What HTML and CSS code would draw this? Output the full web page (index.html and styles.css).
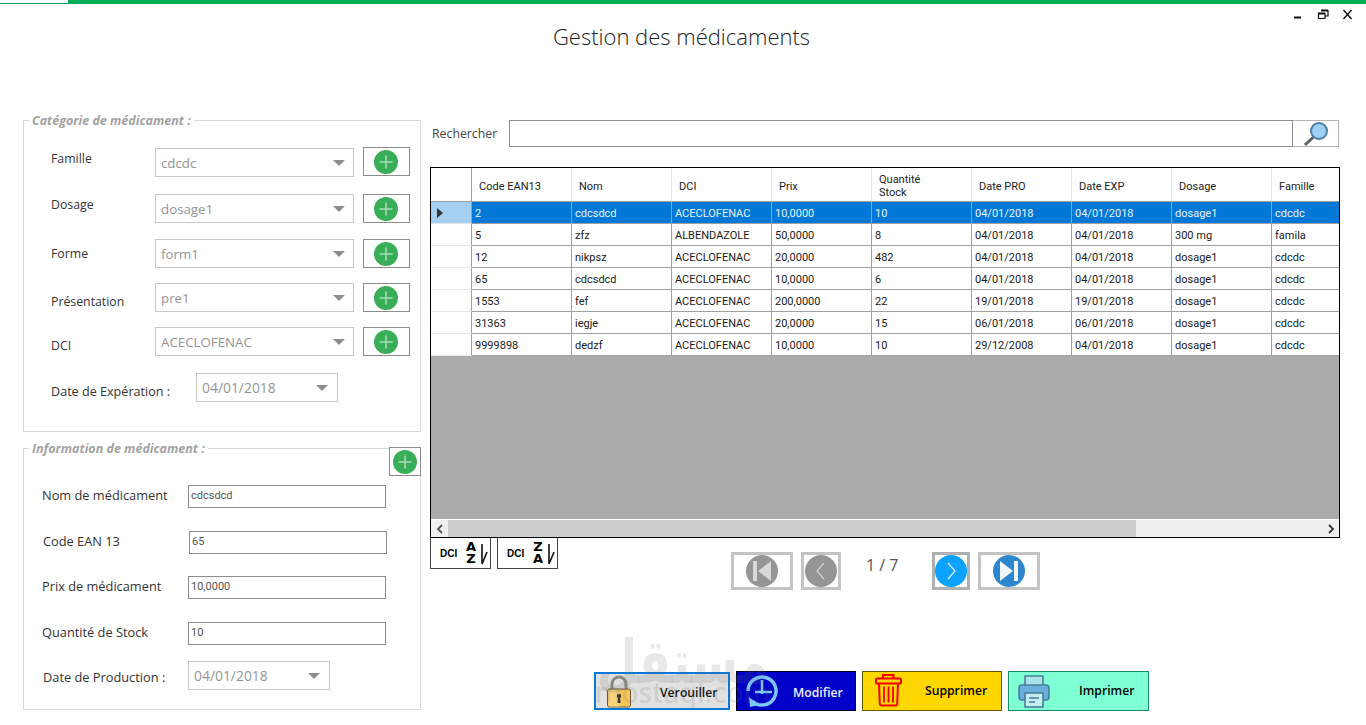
FILE: index.html
```html
<!DOCTYPE html>
<html lang="fr">
<head>
<meta charset="utf-8">
<title>Gestion des médicaments</title>
<link rel="stylesheet" href="styles.css">
</head>
<body>
<svg class="sprite" aria-hidden="true">
  <symbol id="plus" viewBox="0 0 24 24">
    <circle cx="12" cy="12" r="12" fill="#38ae58"/>
    <path d="M12 5.500v13M5.500 12h13" stroke="#a9dcb6" stroke-width="1.600" fill="none"/>
  </symbol>
</svg>
<div class="app">
  <div class="topbar"><span class="topbar-thin"></span><span class="topbar-thick"></span></div>
  <div class="winctl">
    <svg class="winctl-svg" width="62" height="14" viewBox="0 0 62 14">
      <path d="M0 10.500h7" stroke="#111" stroke-width="2" fill="none"/>
      <path d="M24.500 6.500h6.500v5h-6.500zM24.500 6.500v-1M27 3.500h7v5.500h-3" stroke="#111" stroke-width="1.200" fill="none"/>
      <path d="M27 3.500h7M24.500 6.500h6.500" stroke="#111" stroke-width="2" fill="none"/>
      <path d="M49.500 3l8 9M57.500 3l-8 9" stroke="#111" stroke-width="1.500" fill="none"/>
    </svg>
  </div>
  <h1 class="title">Gestion des médicaments</h1>
  <div class="main">
    <div class="left">
      <fieldset class="group group-cat">
        <legend class="group-title">Catégorie de médicament :</legend>
        <div class="cat-row">
          <span class="lbl lbl-up">Famille</span>
          <div class="combo">cdcdc</div>
          <button class="add-btn"><svg class="add-ic"><use href="#plus"/></svg></button>
        </div>
        <div class="cat-row">
          <span class="lbl lbl-up">Dosage</span>
          <div class="combo">dosage1</div>
          <button class="add-btn"><svg class="add-ic"><use href="#plus"/></svg></button>
        </div>
        <div class="cat-row">
          <span class="lbl">Forme</span>
          <div class="combo">form1</div>
          <button class="add-btn"><svg class="add-ic"><use href="#plus"/></svg></button>
        </div>
        <div class="cat-row">
          <span class="lbl lbl-down">Présentation</span>
          <div class="combo">pre1</div>
          <button class="add-btn"><svg class="add-ic"><use href="#plus"/></svg></button>
        </div>
        <div class="cat-row">
          <span class="lbl lbl-down">DCI</span>
          <div class="combo">ACECLOFENAC</div>
          <button class="add-btn"><svg class="add-ic"><use href="#plus"/></svg></button>
        </div>
        <div class="date-row">
          <span class="lbl lbl-down">Date de Expération :</span>
          <div class="combo combo-date">04/01/2018</div>
        </div>
      </fieldset>
      <fieldset class="group group-info">
        <legend class="group-title">Information de médicament :</legend>
        <button class="add-btn add-corner"><svg class="add-ic"><use href="#plus"/></svg></button>
        <div class="info-row">
          <span class="lbl">Nom de médicament</span>
          <div class="field">cdcsdcd</div>
        </div>
        <div class="info-row info-shift">
          <span class="lbl">Code EAN 13</span>
          <div class="field">65</div>
        </div>
        <div class="info-row">
          <span class="lbl">Prix de médicament</span>
          <div class="field">10,0000</div>
        </div>
        <div class="info-row">
          <span class="lbl">Quantité de Stock</span>
          <div class="field">10</div>
        </div>
        <div class="info-row info-date">
          <span class="lbl">Date de Production :</span>
          <div class="combo combo-date">04/01/2018</div>
        </div>
      </fieldset>
    </div>

    <div class="right">
      <div class="search">
        <span class="search-lbl">Rechercher</span>
        <div class="search-input"></div>
        <button class="search-btn">
          <svg width="28" height="26" viewBox="0 0 28 26">
            <path d="M3 24l9-8.500" stroke="#5c6468" stroke-width="3" fill="none"/>
            <circle cx="17" cy="10" r="8" fill="#9fd0f8" stroke="#4c7fa6" stroke-width="2"/>
          </svg>
        </button>
      </div>

      <div class="grid">
        <div class="grid-view">
          <table class="tbl">
            <colgroup>
              <col class="col-head"><col class="col-data"><col class="col-data"><col class="col-data"><col class="col-data"><col class="col-data"><col class="col-data"><col class="col-data"><col class="col-data"><col class="col-data">
            </colgroup>
            <thead>
              <tr>
                <th></th><th>Code EAN13</th><th>Nom</th><th>DCI</th><th>Prix</th><th class="th-two">Quantité<br>Stock</th><th>Date PRO</th><th>Date EXP</th><th>Dosage</th><th>Famille</th>
              </tr>
            </thead>
            <tbody>
              <tr class="sel"><td class="rowhead"><span class="caret"></span></td><td>2</td><td>cdcsdcd</td><td>ACECLOFENAC</td><td>10,0000</td><td>10</td><td>04/01/2018</td><td>04/01/2018</td><td>dosage1</td><td>cdcdc</td></tr>
              <tr><td class="rowhead"></td><td>5</td><td>zfz</td><td>ALBENDAZOLE</td><td>50,0000</td><td>8</td><td>04/01/2018</td><td>04/01/2018</td><td>300 mg</td><td>famila</td></tr>
              <tr><td class="rowhead"></td><td>12</td><td>nikpsz</td><td>ACECLOFENAC</td><td>20,0000</td><td>482</td><td>04/01/2018</td><td>04/01/2018</td><td>dosage1</td><td>cdcdc</td></tr>
              <tr><td class="rowhead"></td><td>65</td><td>cdcsdcd</td><td>ACECLOFENAC</td><td>10,0000</td><td>6</td><td>04/01/2018</td><td>04/01/2018</td><td>dosage1</td><td>cdcdc</td></tr>
              <tr><td class="rowhead"></td><td>1553</td><td>fef</td><td>ACECLOFENAC</td><td>200,0000</td><td>22</td><td>19/01/2018</td><td>19/01/2018</td><td>dosage1</td><td>cdcdc</td></tr>
              <tr><td class="rowhead"></td><td>31363</td><td>iegje</td><td>ACECLOFENAC</td><td>20,0000</td><td>15</td><td>06/01/2018</td><td>06/01/2018</td><td>dosage1</td><td>cdcdc</td></tr>
              <tr><td class="rowhead"></td><td>9999898</td><td>dedzf</td><td>ACECLOFENAC</td><td>10,0000</td><td>10</td><td>29/12/2008</td><td>04/01/2018</td><td>dosage1</td><td>cdcdc</td></tr>
            </tbody>
          </table>
        </div>
        <div class="hscroll">
          <span class="hscroll-arrow">
            <svg width="8" height="10" viewBox="0 0 8 10"><path d="M6 1L2 5l4 4" stroke="#555" stroke-width="1.800" fill="none"/></svg>
          </span>
          <span class="hscroll-thumb"></span>
          <span class="hscroll-rest"></span>
          <span class="hscroll-arrow">
            <svg width="8" height="10" viewBox="0 0 8 10"><path d="M2 1l4 4-4 4" stroke="#333" stroke-width="1.800" fill="none"/></svg>
          </span>
        </div>
      </div>

      <div class="under">
        <div class="sorts">
          <button class="sort-btn">
            <span class="sort-dci">DCI</span>
            <span class="sort-az">A<br>Z</span>
            <svg class="sort-arrow" width="10" height="24" viewBox="0 0 10 24"><path d="M4 3v20l5-12" stroke="#111" stroke-width="1.600" fill="none"/></svg>
          </button>
          <button class="sort-btn">
            <span class="sort-dci">DCI</span>
            <span class="sort-az">Z<br>A</span>
            <svg class="sort-arrow" width="10" height="24" viewBox="0 0 10 24"><path d="M4 3v20l5-12" stroke="#111" stroke-width="1.600" fill="none"/></svg>
          </button>
        </div>
        <div class="pager">
          <button class="pg-btn pg-wide">
            <svg class="pg-ic" viewBox="-16 -16 32 32"><circle r="16" fill="#959595"/><path d="M-9-10h4v20h-4zM9-10v20L-4 0z" fill="#d8d8d8"/></svg>
          </button>
          <button class="pg-btn pg-prev">
            <svg class="pg-ic" viewBox="-16 -16 32 32"><circle r="16" fill="#959595"/><path d="M3-8l-7 8 7 8" stroke="#d0d0d0" stroke-width="1.200" fill="none"/></svg>
          </button>
          <span class="pg-count">1 / 7</span>
          <button class="pg-btn pg-next">
            <svg class="pg-ic" viewBox="-16 -16 32 32"><circle r="16" fill="#0ca2ff"/><path d="M-3-8l7 8-7 8" stroke="#e4f4ff" stroke-width="1.200" fill="none"/></svg>
          </button>
          <button class="pg-btn pg-wide pg-last">
            <svg class="pg-ic" viewBox="-16 -16 32 32"><circle r="16" fill="#2e86cc"/><path d="M5-10h4v20h-4zM-9-10v20L4 0z" fill="#f2f7fb"/></svg>
          </button>
        </div>
      </div>

      <div class="actions">
        <button class="act act-lock">
          <svg class="act-ic" width="26" height="33" viewBox="0 0 26 33">
            <path d="M6 16V9a7 7 0 0 1 14 0v7" stroke="#8b8b80" stroke-width="3" fill="none"/>
            <rect x="1.500" y="14" width="23" height="18" rx="2" fill="#f6c558" stroke="#6d5a34"/>
            <path d="M2 15h11v16.500H4a2 2 0 0 1-2-2z" fill="#f9d47d"/>
            <circle cx="13" cy="21" r="2.200" fill="#3e3a30"/><path d="M12 22h2l.5 6h-3z" fill="#3e3a30"/>
          </svg>
          <span class="act-text">Verouiller</span>
        </button>
        <button class="act act-edit">
          <svg class="act-ic" width="34" height="36" viewBox="0 0 34 36">
            <path d="M7.100 27.900A14 14 0 1 0 3 18" stroke="#7cc8f8" stroke-width="3.500" fill="none"/>
            <path d="M4 24l1 10 9-2z" fill="#7cc8f8"/>
            <path d="M17 7v14M10 19h17" stroke="#7cc8f8" stroke-width="2.500" fill="none"/>
          </svg>
          <span class="act-text">Modifier</span>
        </button>
        <button class="act act-del">
          <svg class="act-ic" width="27" height="34" viewBox="0 0 27 34">
            <path d="M8 4.500V1h10.500v3.500" fill="none" stroke="#f20000" stroke-width="2"/>
            <rect x="1" y="4.500" width="25" height="5" rx="1" fill="none" stroke="#f20000" stroke-width="2"/>
            <path d="M4 9.500l.8 20a2 2 0 0 0 2 2h13.400a2 2 0 0 0 2-2l.8-20" fill="none" stroke="#f20000" stroke-width="2"/>
            <path d="M9 12.500v16M13.500 12.500v16M18 12.500v16" stroke="#f20000" stroke-width="1.800" fill="none"/>
          </svg>
          <span class="act-text">Supprimer</span>
        </button>
        <button class="act act-print">
          <svg class="act-ic" width="32" height="33" viewBox="0 0 32 33">
            <path d="M7 11V1h18v10" fill="#a9e3e6" stroke="#4a7d9c" stroke-width="1.600"/>
            <rect x="1" y="10" width="30" height="15" rx="3" fill="#6ab0dc" stroke="#4a7d9c" stroke-width="1.600"/>
            <rect x="7" y="18" width="18" height="14" fill="#c5eef0" stroke="#4a7d9c" stroke-width="1.600"/>
            <path d="M11 23h10M11 27h6" stroke="#4a7d9c" stroke-width="1.500" fill="none"/>
          </svg>
          <span class="act-text">Imprimer</span>
        </button>
      </div>
    </div>
  </div>
  <div class="watermark" aria-hidden="true">
    <span class="wm-ar">مستقل</span>
    <span class="wm-la">mostaql.com</span>
  </div>
</div>
</body>
</html>
```
FILE: styles.css
```css
* { box-sizing: border-box; }
html, body { margin: 0; padding: 0; background: #fff; }
body { font-family: "Open Sans", "DejaVu Sans", sans-serif; color: #333; }
.sprite { display: block; width: 0; height: 0; overflow: hidden; }
button { font-family: inherit; padding: 0; margin: 0; cursor: default; }

.app { position: relative; width: 1366px; height: 725px; overflow: hidden; background: #fff; }

.topbar { display: flex; align-items: flex-end; height: 4px; }
.topbar-thin { width: 68px; height: 1px; background: #1aa85a; }
.topbar-thick { flex: 1; height: 4px; background: #0aad5a; }

.winctl { position: absolute; top: 4px; right: 10px; }
.winctl-svg { display: block; margin-top: 3px; }

.title { margin: 17px 3px 0 0; height: 30px; line-height: 30px; text-align: center; font-size: 22px; font-weight: 300; color: #222; }

.main { display: flex; gap: 9px; margin-top: 61px; padding-left: 23px; }
.left { width: 398px; display: flex; flex-direction: column; gap: 8px; }
.right { width: 910px; padding-top: 8px; display: flex; flex-direction: column; }

/* group boxes */
.group { position: relative; margin: 0; min-width: 0; border: 1px solid #d8d8d8; }
.group-title { padding: 0 3px; height: 16px; line-height: 18px; font-size: 12.500px; font-style: italic; font-weight: 700; color: #a2a2a2; }
.group-cat { height: 320px; padding: 20px 10px 0 27px; }
.group-cat .group-title { margin-left: -22px; }
.group-info { height: 270px; padding: 29px 0 0 18px; }
.group-info .group-title { margin-left: -13px; }

.lbl { font-size: 12.300px; color: #333; white-space: nowrap; }
.lbl-up { padding-bottom: 8px; }
.lbl-down { padding-top: 8px; }

.cat-row { display: grid; grid-template-columns: 104px 199px 47px; align-items: center; height: 29px; }
.cat-row .add-btn { margin-left: 9px; width: 47px; padding-right: 1px; }
.cat-row:first-of-type .add-btn { margin-top: -2px; }
.cat-row:nth-of-type(2) { margin-top: 17px; }
.cat-row:nth-of-type(3) { margin-top: 16px; }
.cat-row:nth-of-type(4) { margin-top: 15px; }
.cat-row:nth-of-type(5) { margin-top: 15px; }
.date-row { display: grid; grid-template-columns: 145px 142px; align-items: center; height: 29px; margin-top: 17px; }
.date-row .lbl { font-size: 12.600px; }

.combo { position: relative; height: 29px; line-height: 29px; padding-left: 5px; border: 1px solid #c8c8c8; background: #fff; font-size: 13.300px; color: #959595; }
.combo::after { content: ""; position: absolute; right: 8px; top: 11px; border-left: 6px solid transparent; border-right: 6px solid transparent; border-top: 6px solid #8d8d8d; }
.combo-date { width: 142px; line-height: 27px; font-size: 13.900px; }
.combo-date::after { right: 9px; }

.add-btn { display: flex; align-items: center; justify-content: center; height: 29px; background: #fff; border: 1px solid #8c8c8c; }
.add-ic { display: block; width: 24px; height: 24px; }
.add-corner { position: absolute; top: -9px; right: -1px; width: 32px; }

.info-row { display: grid; grid-template-columns: 146px 198px; align-items: center; height: 23px; margin-top: 22px; }
.info-row .lbl { padding-bottom: 4px; font-size: 12.800px; }
.group-info .add-corner + .info-row { margin-top: 0; }
.info-shift { margin-left: 1px; margin-top: 23px; }
.info-row:nth-of-type(4) { margin-top: 23px; }
.info-date { height: 29px; margin-top: 16px; }
.info-row.info-date .lbl { padding: 3px 0 0 1px; }
.field { height: 23px; line-height: 19px; padding-left: 2px; border: 1px solid #8c8c8c; font-family: Roboto, sans-serif; font-size: 11px; color: #555; background: #fff; }

/* search */
.search { display: flex; align-items: center; height: 27px; }
.search-lbl { width: 79px; padding-left: 2px; font-size: 12.300px; color: #444; }
.search-input { width: 784px; height: 27px; border: 1px solid #8c8c8c; background: #fff; }
.search-btn { display: flex; align-items: center; justify-content: center; width: 46px; height: 27px; background: #fff; border: 1px solid #b4b4b4; border-left: 0; }

/* grid */
.grid { display: flex; flex-direction: column; margin-top: 20px; width: 910px; height: 371px; border: 1px solid #000; background: #ababab; }
.grid-view { flex: 1; min-height: 0; overflow: hidden; }
.tbl { table-layout: fixed; width: 941px; border-collapse: separate; border-spacing: 0; background: #fff; font-family: Roboto, sans-serif; font-size: 11px; color: #1a1a1a; }
.col-head { width: 41px; }
.col-data { width: 100px; }
.tbl th { height: 34px; padding: 4px 0 0 7px; border-right: 1px solid #e6e6e6; border-bottom: 1px solid #a0a0a0; text-align: left; font-weight: 400; line-height: 13px; color: #222; }
.tbl .th-two { padding-top: 2px; }
.tbl td { height: 22px; padding: 2px 0 0 3px; border-right: 1px solid #a0a0a0; border-bottom: 1px solid #a0a0a0; white-space: nowrap; }
.tbl th:first-child { border-right-color: #a0a0a0; }
.tbl .rowhead { padding: 0; border-bottom-color: #e6e6e6; }
.sel td { background: #0078d7; color: #e8f2fb; }
.sel td.rowhead { background: #a6d0f2; }
.caret { display: block; margin-left: 6px; width: 0; height: 0; border-top: 5px solid transparent; border-bottom: 5px solid transparent; border-left: 6px solid #333; }

.hscroll { display: flex; flex: none; height: 18px; border-top: 1px solid #fff; background: #f0f0f0; }
.hscroll-arrow { display: flex; align-items: center; justify-content: center; width: 17px; flex: none; }
.hscroll-thumb { width: 688px; flex: none; background: #cdcdcd; }
.hscroll-rest { flex: 1; }

/* under the grid */
.under { display: flex; align-items: flex-start; }
.sorts { display: flex; gap: 6px; width: 301px; flex: none; }
.sort-btn { display: flex; align-items: center; width: 61px; height: 31px; padding-left: 9px; background: #fff; border: 1px solid #444; border-top: 0; color: #000; }
.sort-dci { width: 17px; font-family: "Liberation Sans", sans-serif; font-size: 10px; font-weight: 700; white-space: nowrap; }
.sort-az { margin-left: 8px; width: 12px; font-family: "DejaVu Sans", sans-serif; font-size: 13px; font-weight: 700; line-height: 12px; text-align: center; }
.sort-arrow { margin-left: 1px; }

.pager { display: flex; align-items: flex-start; margin-top: 14px; }
.pg-btn { display: flex; align-items: center; justify-content: center; height: 38px; background: #fff; border: 3px solid #c4c4c4; }
.pg-ic { display: block; width: 32px; height: 32px; }
.pg-wide { width: 62px; }
.pg-prev { width: 40px; margin-left: 8px; }
.pg-count { width: 91px; padding-left: 25px; font-size: 16px; line-height: 26px; color: #555; font-weight: 400; }
.pg-next { width: 38px; border-color: #b0b0b0; }
.pg-last { margin-left: 8px; }

/* bottom buttons */
.actions { display: flex; align-items: center; gap: 6px; margin-top: 81px; margin-left: 164px; }
.act { position: relative; display: flex; align-items: center; height: 40px; font-size: 12.200px; font-weight: 600; color: #000; }
.act-text { white-space: nowrap; }
.act-lock { width: 136px; height: 38px; padding-left: 10px; background: #e1e1e1; border: 2px solid #0a78d7; color: #111; }
.act-lock .act-text { margin-left: 28px; padding-top: 2px; }
.act-edit { width: 120px; padding-left: 8px; background: #0000c8; border: 1px solid #000020; color: #eef0ff; }
.act-edit .act-text { margin-left: 14px; padding-top: 2px; }
.act-del { width: 140px; padding-left: 12px; background: #ffd700; border: 1px solid #6a5200; }
.act-del .act-text { margin-left: 23px; padding-bottom: 2px; }
.act-print { width: 141px; padding-left: 9px; background: #7fffd4; border: 1px solid #1a8a68; }
.act-print .act-text { margin-left: 29px; padding-bottom: 2px; }

.watermark { position: absolute; left: 595px; top: 632px; width: 175px; display: flex; flex-direction: column; align-items: center; pointer-events: none; color: rgba(110, 110, 110, 0.16); }
.wm-ar { height: 46px; font-family: "DejaVu Sans", sans-serif; font-weight: 700; font-size: 47px; line-height: 46px; white-space: nowrap; transform: scaleY(1.3); transform-origin: top; }
.wm-la { font-family: "Open Sans", sans-serif; font-size: 28px; font-weight: 600; line-height: 28px; white-space: nowrap; }
```
